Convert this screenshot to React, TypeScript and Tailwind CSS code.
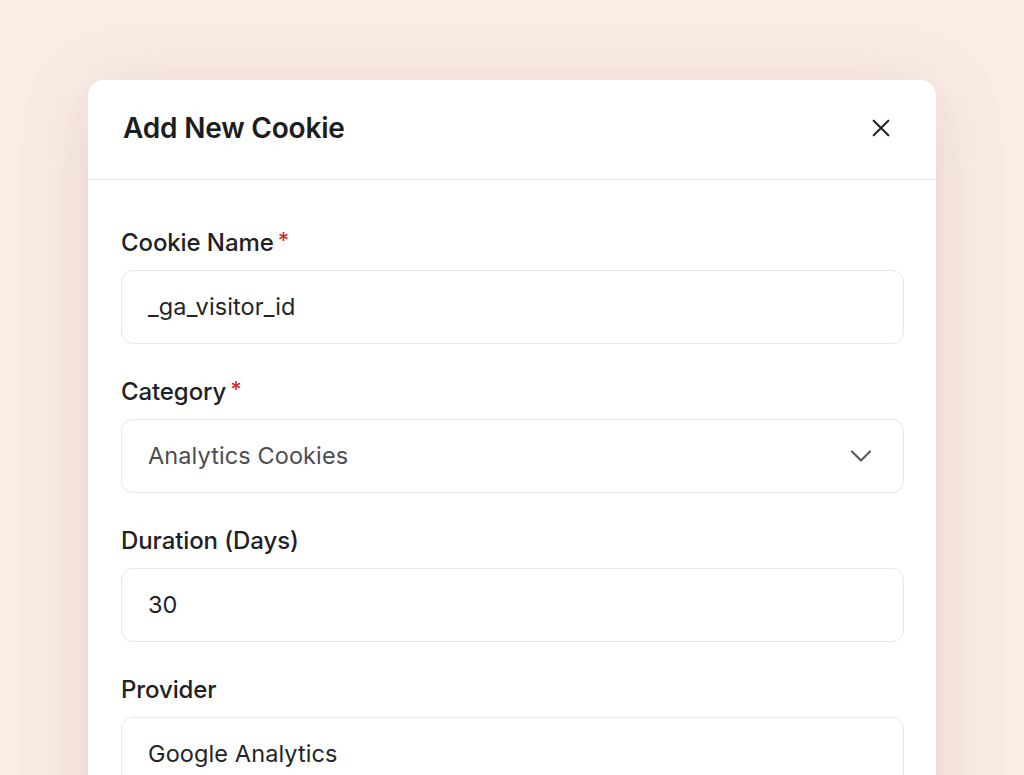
import React from "react";

const font = { fontFamily: "Inter, 'Noto Sans', sans-serif" };

function Label({ text, required }: { text: string; required?: boolean }) {
  return (
    <div className="h-[30px] flex items-center text-[24px] font-medium text-[#1e2126] leading-none tracking-[-0.1px]">
      <span>{text}</span>
      {required && <span className="text-[#d62a2a] ml-[4px] -mt-[6px] text-[22px]">*</span>}
    </div>
  );
}

function Field({
  label,
  value,
  required,
  select,
}: {
  label: string;
  value: string;
  required?: boolean;
  select?: boolean;
}) {
  return (
    <div className="flex flex-col gap-[12px] mb-[33px]">
      <Label text={label} required={required} />
      <div className="h-[74px] rounded-[12px] border-[1.5px] border-[#e6e6e6] bg-white flex items-center justify-between pl-[26px] pr-[31px]">
        <span className={`text-[23.5px] tracking-[0.1px] ${select ? "text-[#4b4d52]" : "text-[#222428]"}`}>{value}</span>
        {select && (
          <svg width="22" height="14" viewBox="0 0 22 14" fill="none" stroke="#5a5c60" strokeWidth="2.2" strokeLinecap="round" strokeLinejoin="round">
            <path d="M2 2.5l9 9 9-9" />
          </svg>
        )}
      </div>
    </div>
  );
}

export default function App() {
  return (
    <div className="w-[1024px] h-[775px] overflow-hidden bg-[#fbede6]" style={font}>
      <div className="ml-[88px] mt-[80px] w-[848px] rounded-[16px] bg-white shadow-[0_12px_70px_rgba(110,80,60,0.18)]">
        <div className="h-[100px] border-b-[1.5px] border-[#e4e4e4] flex items-center justify-between pl-[35px] pr-[44px] pb-[4px]">
          <h1 className="text-[28px] font-semibold text-[#1a1d21] tracking-[-0.2px]">Add New Cookie</h1>
          <svg width="22" height="22" viewBox="0 0 24 24" fill="none" stroke="#1f2226" strokeWidth="2.2" strokeLinecap="round">
            <path d="M4 4l16 16M20 4L4 20" />
          </svg>
        </div>
        <div className="pl-[33px] pr-[32px] pt-[48px] pb-[40px]">
          <Field label="Cookie Name" value="_ga_visitor_id" required />
          <Field label="Category" value="Analytics Cookies" required select />
          <Field label="Duration (Days)" value="30" />
          <Field label="Provider" value="Google Analytics" />
        </div>
      </div>
    </div>
  );
}
